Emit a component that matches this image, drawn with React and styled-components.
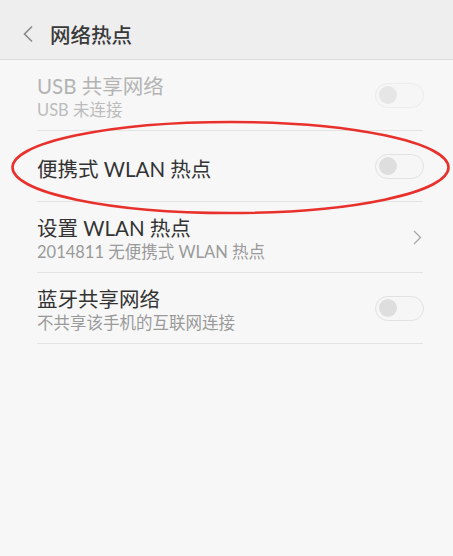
import React from 'react'
import styled, { createGlobalStyle } from 'styled-components'

const GlobalStyle = createGlobalStyle`
    html, body {
        margin:0;
        padding:0;
        background:#f7f7f7;
    }
    body {
        font-family: Lato, "Noto Sans CJK SC", sans-serif;
        -webkit-font-smoothing: antialiased;
    }
`;

const Screen = styled.div`
    position:relative;
    width:453px;
    height:556px;
    overflow:hidden;
    background:#f7f7f7;
`;

const Header = styled.header`
    height:51px;
    padding-top:8px;
    display:flex;
    align-items:center;
    padding-left:22px;
    gap:16px;
    background:#eeeeee;
    border-bottom:1px solid #dcdcdc;
    box-sizing:content-box;
    svg{
        display:block;
    }
`;

const Title = styled.h1`
    margin:0;
    font-size:20.5px;
    font-weight:500;
    color:#3a3a3a;
`;

const List = styled.div`
    padding:0 30px 0 37px;
`;

const Row = styled.div`
    height:70px;
    display:flex;
    align-items:center;
    justify-content:space-between;
    border-bottom:1px solid #e3e3e3;
`;

const Texts = styled.div`
    display:flex;
    flex-direction:column;
    gap:1px;
    padding-top:5px;
`;

const RowTitle = styled.div`
    font-size:20.5px;
    line-height:24px;
    color:${({disabled})=> disabled ? '#b3b3b3' : '#333333'};
`;

const RowSub = styled.div`
    font-size:16.5px;
    line-height:22px;
    color:${({disabled})=> disabled ? '#bcbcbc' : '#9a9a9a'};
`;

const Track = styled.div`
    width:44px;
    height:23px;
    border-radius:13px;
    border:1.5px solid ${({disabled})=> disabled ? '#ececec' : '#e2e2e2'};
    background:#f6f6f6;
    display:flex;
    align-items:center;
    padding-left:3px;
    box-sizing:content-box;
    margin-right:-1px;
`;

const Knob = styled.div`
    width:18px;
    height:18px;
    border-radius:50%;
    background:${({disabled})=> disabled ? '#e6e6e6' : '#dedede'};
`;

const Chevron = styled.svg`
    display:block;
    margin-right:1px;
`;

const Overlay = styled.svg`
    position:absolute;
    left:0;
    top:0;
    pointer-events:none;
`;

const Toggle = ({disabled}) => (
    <Track disabled={disabled}>
        <Knob disabled={disabled}/>
    </Track>
)

const App = () => {
    return (
        <Screen>
            <GlobalStyle/>
            <Header>
                <svg width="12" height="18" viewBox="0 0 12 18">
                    <path d="M10 1.5 L2.5 9 L10 16.5" fill="none" stroke="#8a8a8a" strokeWidth="1.6"/>
                </svg>
                <Title>网络热点</Title>
            </Header>
            <List>
                <Row>
                    <Texts>
                        <RowTitle disabled>USB 共享网络</RowTitle>
                        <RowSub disabled>USB 未连接</RowSub>
                    </Texts>
                    <Toggle disabled/>
                </Row>
                <Row>
                    <Texts>
                        <RowTitle>便携式 WLAN 热点</RowTitle>
                    </Texts>
                    <Toggle/>
                </Row>
                <Row>
                    <Texts>
                        <RowTitle>设置 WLAN 热点</RowTitle>
                        <RowSub>2014811 无便携式 WLAN 热点</RowSub>
                    </Texts>
                    <Chevron width="9" height="15" viewBox="0 0 9 15">
                        <path d="M1 1 L7.5 7.5 L1 14" fill="none" stroke="#a8a8a8" strokeWidth="1.3"/>
                    </Chevron>
                </Row>
                <Row>
                    <Texts>
                        <RowTitle>蓝牙共享网络</RowTitle>
                        <RowSub>不共享该手机的互联网连接</RowSub>
                    </Texts>
                    <Toggle/>
                </Row>
            </List>
            {/* red annotation ring drawn over the screenshot */}
            <Overlay width="453" height="556" viewBox="0 0 453 556">
                <ellipse cx="230.5" cy="167.5" rx="218" ry="45.5" fill="none" stroke="#e8312c" strokeWidth="2.6"/>
            </Overlay>
        </Screen>
    )
}

export default App
